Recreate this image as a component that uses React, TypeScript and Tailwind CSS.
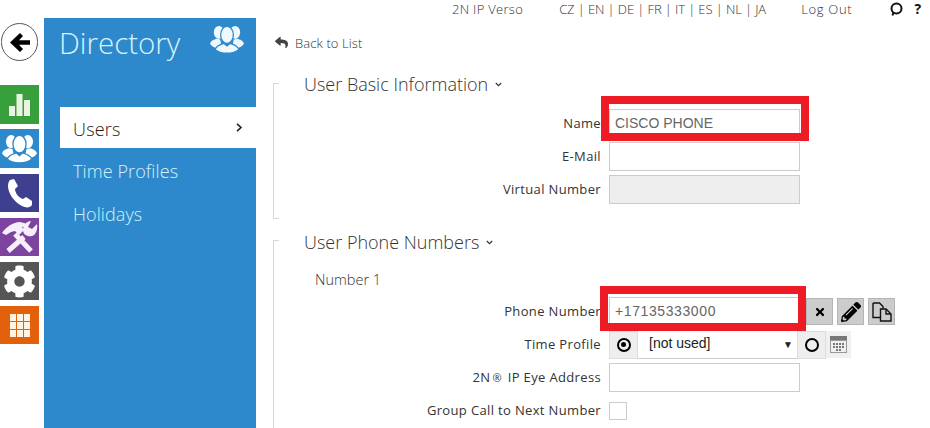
import { type ReactNode } from 'react';
import { FaCog, FaPencilAlt, FaReply, FaTimes } from 'react-icons/fa';

function People({ size, gap }: { size: number; gap: string }) {
  return (
    <svg width={size} height={size * 0.8} viewBox="0 0 40 32" fill="currentColor">
      <ellipse cx="10.500" cy="7.500" rx="6" ry="7.500" />
      <ellipse cx="29.500" cy="7.500" rx="6" ry="7.500" />
      <path d="M0 21c1-4 5-5 8-6l4 1 2 9-5 1c-4 0-7-2-9-5z" />
      <path d="M40 21c-1-4-5-5-8-6l-4 1-2 9 5 1c4 0 7-2 9-5z" />
      <ellipse cx="20" cy="10.500" rx="7.500" ry="10" stroke={gap} strokeWidth="1.500" />
      <path d="M6 27.500c2-5 7-6 10.500-7l3.500 3 3.500-3c3.500 1 8.500 2 10.500 7-3 3-8 4.500-14 4.500s-11-1.500-14-4.500z" stroke={gap} strokeWidth="1.500" />
    </svg>
  );
}

function Tile({ color, children }: { color: string; children: ReactNode }) {
  return <div className={`flex w-[39px] items-center justify-center text-white ${color}`}>{children}</div>;
}

function Rail() {
  return (
    <div className="flex w-[44px] shrink-0 flex-col">
      <div className="mt-[5px] ml-px flex h-[38px] w-[37px] items-center justify-center rounded-full border border-[#555] bg-white">
        <svg width="20" height="19" viewBox="0 0 20 19" fill="#000">
          <path d="M10 0 13 3 9 7.200H20V11.800H9L13 16 10 19 0 9.500z" />
        </svg>
      </div>
      <div className="mt-[24px] flex flex-col gap-[6px]">
        <Tile color="h-[39px] bg-[#379f3b]">
          <svg width="21" height="22" viewBox="0 0 21 22" fill="#e9f5e0">
            <rect x="0" y="12" width="6" height="10" />
            <rect x="7.500" y="0" width="6" height="22" />
            <rect x="15" y="6" width="6" height="16" />
          </svg>
        </Tile>
        <Tile color="-mt-px h-[39px] bg-[#2e89cc]">
          <People size={35} gap="#2e89cc" />
        </Tile>
        <Tile color="h-[38px] bg-[#3f3f8f]">
          <svg width="27" height="29" viewBox="0 0 27 29" fill="#fff">
            <path d="M4 1 8 0l4 7-3 3c0 4 4 9 8 10l3-2 6 4v4c-2 3-6 3-10 1C8 23 2 14 2 7c0-3 1-5 2-6z" />
          </svg>
        </Tile>
        <Tile color="h-[38px] bg-[#7c439f]">
          <svg width="39" height="38" viewBox="0 0 39 38" fill="#f6eff9">
            <path d="M2 15C6 9 13 4 20 4l8 2-1 2-5 1 2 3-5 5-4-4-4 1-5 3z" />
            <path d="M15 16 31 33" stroke="#f6eff9" strokeWidth="5" />
            <path d="M24 19 8 33" stroke="#f6eff9" strokeWidth="5" />
            <path d="M37 6 32 11 28 9 31 3C27 3 23 7 23 12 23 17 28 19 32 18 36 17 38 11 37 6z" />
          </svg>
        </Tile>
        <Tile color="h-[38px] bg-[#555555]">
          <FaCog size={33} />
        </Tile>
        <Tile color="h-[38px] bg-[#e2600b]">
          <div className="grid grid-cols-3 gap-px">
            {Array.from({ length: 9 }).map((_, i) => (
              <div key={i} className="h-[7px] w-[6px] bg-[#fff3e2]" />
            ))}
          </div>
        </Tile>
      </div>
    </div>
  );
}

function Sidebar() {
  return (
    <div className="flex w-[212px] shrink-0 flex-col bg-[#2e89cc] pl-[16px]">
      <div className="flex items-start justify-between pr-[12px] pt-[4px]">
        <span className="-ml-px text-[29.5px] leading-[42px] font-light text-[#d8f3fb]">Directory</span>
        <span className="mt-[4px] text-[#eef8fd]">
          <People size={34} gap="#2e89cc" />
        </span>
      </div>
      <div className="mt-[43px] flex h-[41px] items-center justify-between bg-white pl-[13px] pr-[13px] pt-[3px] text-[18px] font-light tracking-[0.2px] text-[#222]">
        <span>Users</span>
        <svg className="-mt-[4px]" width="7" height="9" viewBox="0 0 7 9" fill="none" stroke="#222" strokeWidth="1.6">
          <path d="M1 .8 5 4.500 1 8.200" />
        </svg>
      </div>
      <div className="mt-[3px] flex h-[41px] items-center pl-[13px] text-[18px] font-light tracking-[0.1px] text-[#d5f1fb]">Time Profiles</div>
      <div className="mt-px flex h-[43px] items-center pl-[13px] text-[18px] font-light tracking-[0.1px] text-[#d5f1fb]">Holidays</div>
    </div>
  );
}

function Heading({ children }: { children: ReactNode }) {
  return (
    <div className="flex items-center gap-[7px] pl-[30px] text-[18px] leading-[24px] font-light text-[#333]">
      {children}
      <svg width="7" height="5" viewBox="0 0 7 5" fill="none" stroke="#333" strokeWidth="1.2">
        <path d="M.8 1 3.500 3.600 6.200 1" />
      </svg>
    </div>
  );
}

function Row({ label, children }: { label: ReactNode; children: ReactNode }) {
  return (
    <div className="flex h-[33px] items-center gap-[8px]">
      <div className="w-[327px] shrink-0 text-right text-[13px] font-normal tracking-[0.35px] text-[#333]">{label}</div>
      {children}
    </div>
  );
}

function Input({ value, disabled, spaced }: { value?: string; disabled?: boolean; spaced?: boolean }) {
  return (
    <div
      className={`flex h-[29px] w-[191px] items-center border border-[#ccc] px-[5px] pb-px font-['Liberation_Sans',sans-serif] text-[14px] text-[#666] ${
        disabled ? 'bg-[#eeeeee]' : 'bg-white'
      } ${spaced ? 'tracking-[0.6px]' : ''}`}
    >
      {value}
    </div>
  );
}

function ToolButton({ children }: { children: ReactNode }) {
  return (
    <div className="flex h-[27px] w-[27px] items-center justify-center border border-[#b5b5b5] bg-[#cccccc] text-black">{children}</div>
  );
}

function Radio({ on }: { on?: boolean }) {
  return (
    <div className="flex h-[28px] w-[29px] shrink-0 items-center justify-center border border-[#dddddd] bg-[#eeeeee]">
      <div className="flex h-[14px] w-[14px] items-center justify-center rounded-full border-2 border-black">
        {on && <div className="h-[5px] w-[5px] rounded-full bg-black" />}
      </div>
    </div>
  );
}

function Section({ className, children }: { className: string; children: ReactNode }) {
  return (
    <div className={`relative border-l border-[#d8d8d8] ${className}`}>
      <span className="absolute top-0 left-0 h-px w-[5px] bg-[#d8d8d8]" />
      <span className="absolute bottom-0 left-0 h-px w-[5px] bg-[#d8d8d8]" />
      {children}
    </div>
  );
}

export default function App() {
  return (
    <div className="flex h-[428px] w-[930px] flex-col overflow-hidden bg-white font-['Open_Sans',sans-serif]">
      <div className="flex h-[18px] shrink-0 items-center text-[13px] leading-[18px] font-light text-[#333]">
        <span className="ml-[452px] tracking-[0.3px]">2N IP Verso</span>
        <span className="ml-[36px] w-[206px] whitespace-nowrap tracking-[-0.1px]">CZ | EN | DE | FR | IT | ES | NL | JA</span>
        <span className="ml-[36px] tracking-[0.7px]">Log Out</span>
        <svg className="ml-[37px]" width="14" height="14" viewBox="0 0 14 14" fill="none" stroke="#111" strokeWidth="2">
          <circle cx="7.500" cy="6.500" r="5" />
          <path d="M4.500 10.500 3.500 13.500" />
        </svg>
        <span className="ml-[11px] text-[14px] font-bold text-[#111]">?</span>
      </div>
      <div className="flex min-h-0 flex-1">
        <Rail />
        <Sidebar />
        <div className="flex-1 pl-[17px]">
          <div className="flex h-[34px] items-end gap-[7px] pl-[2px] text-[13px] leading-[18px] font-light tracking-[0.1px] text-[#333]">
            <FaReply size={13} className="mb-[3px] text-[#444]" />
            <span>Back to List</span>
          </div>
          <Section className="mt-[31px] h-[136px]">
            <div className="relative -top-[11px]">
              <Heading>User Basic Information</Heading>
            </div>
            <div>
              <div className="relative w-fit">
                <Row label="Name">
                  <Input value="CISCO PHONE" />
                </Row>
                <div className="absolute top-[-11px] left-[327px] h-[45px] w-[208px] border-[8px] border-[#ed1c24]" />
              </div>
              <Row label="E-Mail">
                <Input />
              </Row>
              <Row label="Virtual Number">
                <Input disabled />
              </Row>
            </div>
          </Section>
          <Section className="mt-[21px] h-[200px]">
            <div className="relative -top-[10px]">
              <Heading>User Phone Numbers</Heading>
            </div>
            <div className="mt-[6px] pl-[41px] text-[14.5px] leading-[20px] font-light text-[#333]">Number 1</div>
            <div className="mt-[5px]">
              <div className="relative flex w-fit items-center">
                <Row label="Phone Number">
                  <Input value="+17135333000" spaced />
                </Row>
                <div className="ml-[6px] flex gap-[4px]">
                  <ToolButton>
                    <FaTimes size={12} />
                  </ToolButton>
                  <ToolButton>
                    <FaPencilAlt size={20} />
                  </ToolButton>
                  <ToolButton>
                    <svg width="20" height="20" viewBox="0 0 20 20" fill="none" stroke="#111" strokeWidth="1.400">
                      <path d="M1 1h6.500L11 4.500V7M8 15.500H1V1" />
                      <path d="M8.500 7H14l5 5v7H8.500z" />
                      <path d="M14 7v5h5" />
                    </svg>
                  </ToolButton>
                </div>
                <div className="absolute top-[-9px] left-[326px] h-[45px] w-[206px] border-[8px] border-[#ed1c24]" />
              </div>
              <Row label="Time Profile">
                <div className="flex items-center">
                  <Radio on />
                  <div className="flex h-[28px] w-[159px] items-center justify-between border-b border-[#ccc] pl-[11px] pr-[4px] pb-px font-['Liberation_Sans',sans-serif] text-[14px] text-[#222]">
                    [not used]
                    <span className="mt-[2px] text-[10px] text-[#222]">▼</span>
                  </div>
                  <Radio />
                  <div className="flex h-[27px] w-[25px] items-center justify-center bg-[#f0f0f0]">
                    <svg width="17" height="17" viewBox="0 0 17 17" fill="#777">
                      <rect x="0" y="0" width="17" height="4" />
                      <rect x=".5" y="4.500" width="16" height="12" fill="none" stroke="#999" />
                      <path d="M3 7h2v2H3zM6 7h2v2H6zM9 7h2v2H9zM12 7h2v2h-2zM3 10h2v2H3zM6 10h2v2H6zM9 10h2v2H9zM12 10h2v2h-2zM6 13h2v2H6zM9 13h2v2H9z" />
                    </svg>
                  </div>
                </div>
              </Row>
              <Row
                label={
                  <>
                    2N<span className="mx-[2px] text-[11px]">®</span> IP Eye Address
                  </>
                }
              >
                <Input />
              </Row>
              <Row label="Group Call to Next Number">
                <div className="h-[18px] w-[18px] border border-[#ccc] bg-white" />
              </Row>
            </div>
          </Section>
        </div>
      </div>
    </div>
  );
}
